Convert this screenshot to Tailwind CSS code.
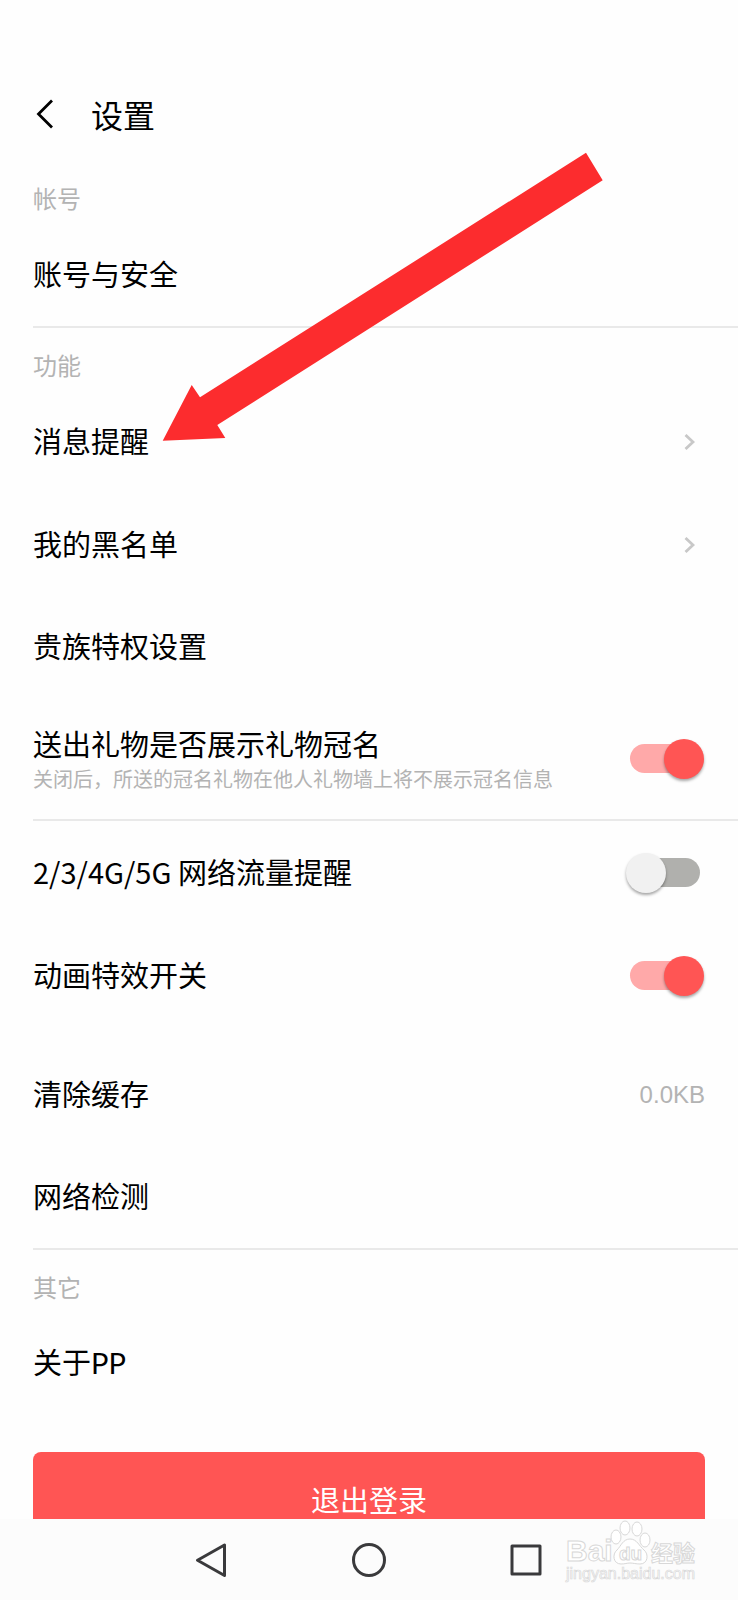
<!DOCTYPE html>
<html lang="zh-CN">
<head>
<meta charset="utf-8">
<meta name="viewport" content="width=device-width, initial-scale=1">
<title>设置</title>
<script src="https://cdn.jsdelivr.net/npm/@tailwindcss/browser@4"></script>
</head>
<body class="bg-[#fefefe] text-black font-['Lato','Noto_Sans_CJK_SC',sans-serif]">
<div class="relative flex h-screen flex-col overflow-hidden">
  <header class="flex h-[161px] shrink-0 items-end pb-[21px] pl-[33px]">
    <button type="button" aria-label="返回" class="flex h-12 w-[58px] items-center pb-1">
      <svg class="h-8 w-6" viewBox="0 0 24 32" fill="none" stroke="#000" stroke-width="2.8"><path d="M19 2.5 5.500 16 19 29.500"/></svg>
    </button>
    <h1 class="text-[32px] leading-[48px]">设置</h1>
  </header>

  <main class="min-h-0 flex-1 overflow-hidden text-[29px] leading-[40px]">
    <section class="ml-[33px] border-b-2 border-[#e9e9e9]">
      <h2 class="h-[63px] pt-[22px] text-[24px] leading-8 text-[#b3b3b3]">帐号</h2>
      <a href="#account" class="flex h-[102px] items-center">账号与安全</a>
    </section>

    <section class="ml-[33px] border-b-2 border-[#e9e9e9]">
      <h2 class="h-[62px] pt-[22px] text-[24px] leading-8 text-[#b3b3b3]">功能</h2>
      <a href="#notify" class="flex h-[103px] items-center justify-between pr-[43px]">消息提醒
        <svg class="h-4 w-[11px]" viewBox="0 0 11 16" fill="none" stroke="#c8c8c8" stroke-width="2.800"><path d="M1.500 1 9 8 1.500 15"/></svg>
      </a>
      <a href="#blacklist" class="flex h-[103px] items-center justify-between pr-[43px]">我的黑名单
        <svg class="h-4 w-[11px]" viewBox="0 0 11 16" fill="none" stroke="#c8c8c8" stroke-width="2.800"><path d="M1.500 1 9 8 1.500 15"/></svg>
      </a>
      <a href="#noble" class="flex h-[102px] items-center">贵族特权设置</a>
      <div class="flex h-[121px] items-center justify-between pr-[38px]">
        <label for="gift">
          <span class="block">送出礼物是否展示礼物冠名</span>
          <span class="block text-[20px] leading-7 text-[#b3b3b3]">关闭后，所送的冠名礼物在他人礼物墙上将不展示冠名信息</span>
        </label>
        <input id="gift" type="checkbox" role="switch" checked class="relative h-[29px] w-[70px] shrink-0 appearance-none rounded-full bg-[#b0b0ad] before:absolute before:-left-1 before:-top-[5px] before:size-10 before:rounded-full before:bg-[#f1f1f1] before:shadow-[0_2px_3px_rgba(0,0,0,0.35)] checked:bg-[#ffa9a9] checked:before:left-[34px] checked:before:bg-[#ff5554]">
      </div>
    </section>

    <section class="ml-[33px] border-b-2 border-[#e9e9e9]">
      <div class="flex h-[103px] items-center justify-between pr-[38px]">
        <label for="traffic" class="pb-1 font-['Noto_Sans_CJK_SC',sans-serif]">2/3/4G/5G 网络流量提醒</label>
        <input id="traffic" type="checkbox" role="switch" class="relative h-[29px] w-[70px] shrink-0 appearance-none rounded-full bg-[#b0b0ad] before:absolute before:-left-1 before:-top-[5px] before:size-10 before:rounded-full before:bg-[#f1f1f1] before:shadow-[0_2px_3px_rgba(0,0,0,0.35)] checked:bg-[#ffa9a9] checked:before:left-[34px] checked:before:bg-[#ff5554]">
      </div>
      <div class="flex h-[103px] items-center justify-between pr-[38px]">
        <label for="effects">动画特效开关</label>
        <input id="effects" type="checkbox" role="switch" checked class="relative h-[29px] w-[70px] shrink-0 appearance-none rounded-full bg-[#b0b0ad] before:absolute before:-left-1 before:-top-[5px] before:size-10 before:rounded-full before:bg-[#f1f1f1] before:shadow-[0_2px_3px_rgba(0,0,0,0.35)] checked:bg-[#ffa9a9] checked:before:left-[34px] checked:before:bg-[#ff5554]">
      </div>
      <a href="#cache" class="mt-4 flex h-[103px] items-center justify-between pr-[33px]">清除缓存
        <span class="font-['Liberation_Sans',sans-serif] text-[24px] text-[#b3b3b3]">0.0KB</span>
      </a>
      <a href="#network" class="flex h-[102px] items-center">网络检测</a>
    </section>

    <section class="ml-[33px]">
      <h2 class="h-[62px] pt-[22px] text-[24px] leading-8 text-[#b3b3b3]">其它</h2>
      <a href="#about" class="flex h-[102px] items-center">关于PP</a>
    </section>

    <div class="mt-[38px] px-[33px]">
      <button type="button" class="h-[98px] w-full rounded-lg bg-[#ff5554] text-white">退出登录</button>
    </div>
  </main>

  <nav class="flex h-[81px] shrink-0 justify-center bg-[#fcfcfc]" aria-label="系统导航">
    <button type="button" aria-label="后退" class="flex w-[157px] items-center justify-center">
      <svg class="size-9" viewBox="0 0 36 36" fill="none" stroke="#3a3a3c" stroke-width="3" stroke-linejoin="round"><path d="M30.500 3v30.500L3.500 18.300Z"/></svg>
    </button>
    <button type="button" aria-label="主页" class="flex w-[157px] items-center justify-center">
      <svg class="size-9" viewBox="0 0 36 36" fill="none" stroke="#3a3a3c" stroke-width="3"><circle cx="18" cy="18" r="15.500"/></svg>
    </button>
    <button type="button" aria-label="最近任务" class="flex w-[157px] items-center justify-center">
      <svg class="size-9" viewBox="0 0 36 36" fill="none" stroke="#3a3a3c" stroke-width="3" stroke-linejoin="round"><path d="M4 4h28v28H4Z"/></svg>
    </button>
  </nav>

  <!-- Annotation arrow -->
  <svg class="pointer-events-none absolute left-[162px] top-[152px] h-[290px] w-[442px]" viewBox="0 0 442 290" fill="#fc2c2e" aria-hidden="true"><path d="M.7 288.700 29.700 233l8.300 12.300L424 .700l16.700 27.600L55.300 273l8 13Z"/></svg>

  <!-- Watermark -->
  <svg class="pointer-events-none absolute bottom-3 right-9 h-[70px] w-[138px] font-['Liberation_Sans','Noto_Sans_CJK_SC',sans-serif] font-bold" viewBox="0 0 138 70" fill="#fff" stroke="#d8d8d8" stroke-width="1">
    <text x="2" y="43" font-size="30">Bai</text>
    <ellipse cx="52" cy="19" rx="5" ry="7"/><ellipse cx="61" cy="10" rx="5" ry="7"/><ellipse cx="73" cy="11" rx="5" ry="7"/><ellipse cx="81" cy="22" rx="5" ry="7"/>
    <path d="M66 21c-7 0-9 7-13 11-5 4-4 14 4 14 4 0 6-1 9-1s6 1 10 1c8 0 9-10 4-14-5-4-7-11-14-11Z"/>
    <text x="55" y="42" font-size="19">du</text>
    <text x="87" y="43" font-size="22">经验</text>
    <text x="2" y="61" font-size="16" font-weight="400" stroke-width=".7">jingyan.baidu.com</text>
  </svg>
</div>
</body>
</html>
